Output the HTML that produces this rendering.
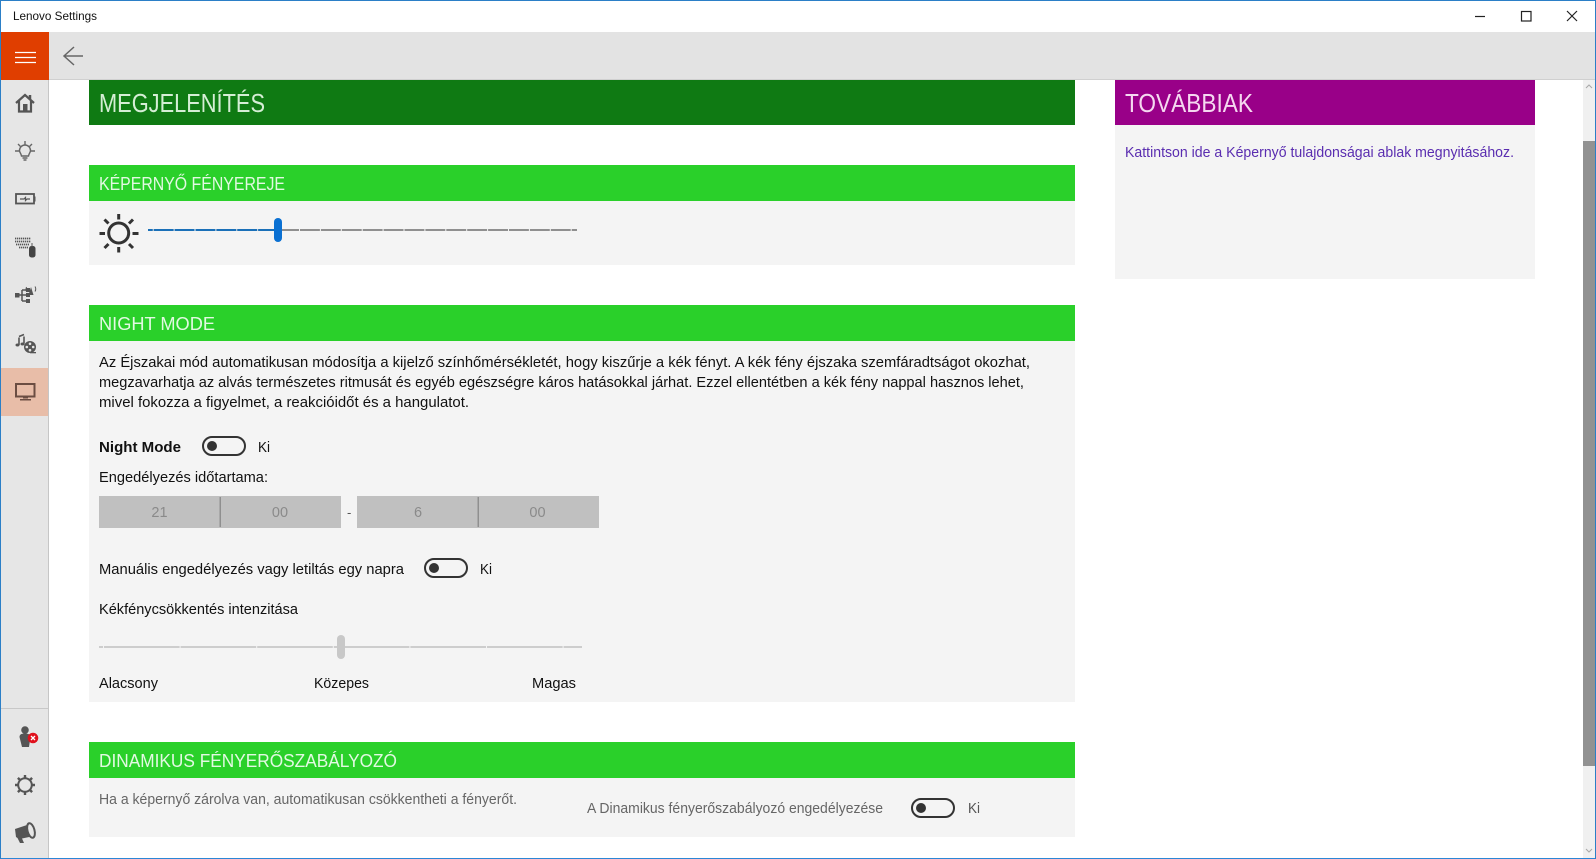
<!DOCTYPE html>
<html lang="hu"><head><meta charset="utf-8"><title>Lenovo Settings</title>
<style>
html,body{margin:0;padding:0;background:#fff;width:1596px;height:859px;overflow:hidden}
svg{display:block}
text{font-family:"Liberation Sans",sans-serif;white-space:pre}
</style></head><body>
<svg xmlns="http://www.w3.org/2000/svg" width="1596" height="859" viewBox="0 0 1596 859">
<rect width="1596" height="859" fill="#fff"/>
<!-- title bar -->
<text x="13" y="20" font-size="12" fill="#111" textLength="84" lengthAdjust="spacingAndGlyphs">Lenovo Settings</text>
<g fill="none" stroke="#222" stroke-width="1.2">
<path d="M1475 16.5H1485"/><rect x="1521.5" y="11.5" width="9.5" height="9.5"/><path d="M1567 11L1577 21M1577 11L1567 21"/>
</g>
<!-- top bar -->
<rect x="1" y="32" width="1594" height="48" fill="#e3e3e3"/>
<rect x="49" y="79" width="1546" height="1" fill="#d0d0d0"/>
<rect x="1" y="32" width="48" height="48" fill="#e03e00"/>
<path d="M15 52.5H36M15 57.5H36M15 62.5H36" stroke="#fff" stroke-width="1.2" fill="none"/>
<path d="M83 56H64M74 47L64 56L74 65" stroke="#666" stroke-width="1.5" fill="none"/>
<!-- sidebar -->
<rect x="1" y="80" width="47" height="778" fill="#e6e6e6"/>
<rect x="48" y="80" width="1" height="778" fill="#c6c6c6"/>
<rect x="1" y="368" width="47" height="48" fill="#e8bda8"/>
<rect x="1" y="708" width="47" height="1" fill="#c8c8c8"/>
<!-- home -->
<g fill="none" stroke="#555" stroke-width="2.2">
<path d="M16 103L25 95L34 103"/><path d="M19 101V111.500H31V101"/>
<path d="M30 95V99" stroke-width="2.5"/>
</g>
<rect x="23" y="104" width="4.500" height="7" fill="#555"/>
<!-- bulb -->
<g fill="none" stroke="#666" stroke-width="1.400">
<path d="M25 141V145M15 151H19M31 151H35M18 144L20.500 146.500M32 144L29.500 146.500"/>
<path d="M21.500 156C21 153 19.500 152.500 19.500 150.500A5.500 5.500 0 0 1 30.500 150.500C30.500 152.500 29 153 28.500 156Z"/>
<path d="M22.500 158H27.500M23.500 160H26.500" stroke-width="1.500"/>
</g>
<!-- battery -->
<g fill="none" stroke="#555" stroke-width="1.800">
<rect x="16" y="194" width="18" height="9.500"/>
<path d="M20 199H24L25.500 197.500V200.500L27 199H30" stroke-width="1.200"/>
</g>
<rect x="34" y="196.500" width="1.500" height="5" fill="#555"/>
<!-- keyboard -->
<g fill="none" stroke="#555" stroke-width="1.700" stroke-dasharray="1.300 .7">
<path d="M15 238.500H31M15 241.500H31M16 244.500H29M19 247.500H28"/>
</g>
<rect x="29" y="246" width="6.500" height="11.500" rx="2.500" fill="#444"/>
<path d="M32 243V247" stroke="#555" stroke-width="1"/>
<!-- network -->
<g stroke="#555" fill="#555">
<path d="M19 295H27M22 290V301M22 290H27M22 301H27" stroke-width="1.500" fill="none"/>
<rect x="15" y="293" width="4.500" height="4.500" stroke="none"/>
<rect x="26" y="288" width="4" height="4" stroke="none"/><rect x="26" y="293" width="4" height="4" stroke="none"/><rect x="26" y="299" width="4" height="4" stroke="none"/>
<path d="M28.500 295L31 287L33.500 295Z" stroke="none"/>
<path d="M26.500 287Q25.500 289.500 26.500 291.500M35 286.500Q36.500 289 35 291.500" fill="none" stroke-width="1"/>
</g>
<!-- music / film -->
<g fill="none" stroke="#555">
<path d="M19 337.500V345M24 336.500V343.500M19 336.500L24 334.500" stroke-width="1.600"/>
</g>
<g fill="#555">
<ellipse cx="17.500" cy="345" rx="2" ry="1.500"/><ellipse cx="22.500" cy="344" rx="2" ry="1.500"/>
<circle cx="30" cy="347" r="6"/><rect x="30" y="352" width="6" height="1.300"/>
</g>
<g fill="#e6e6e6"><circle cx="30" cy="343.800" r="1.300"/><circle cx="30" cy="350.200" r="1.300"/><circle cx="26.800" cy="347" r="1.300"/><circle cx="33.200" cy="347" r="1.300"/></g>
<!-- display -->
<rect x="16" y="384" width="18.500" height="12.500" fill="none" stroke="#6b4d42" stroke-width="2"/>
<path d="M23 397.500H28V398.500H23ZM20 399H31V400.500H20Z" fill="#6b4d42"/>
<!-- user -->
<circle cx="25" cy="730" r="3.800" fill="#555"/>
<path d="M19.500 737C19.500 734 22 733.500 25 733.500C28 733.500 30 734 30.500 737L29 747H22Z" fill="#555"/>
<circle cx="33" cy="738" r="5.300" fill="#e0101c"/>
<path d="M31 736L35 740M35 736L31 740" stroke="#fff" stroke-width="1.300"/>
<!-- gear -->
<circle cx="25" cy="785" r="6.800" fill="none" stroke="#555" stroke-width="2"/>
<g stroke="#555" stroke-width="2.400">
<path d="M25 775V778.500M25 791.500V795M15 785H18.500M31.500 785H35M17.900 777.900L20.400 780.400M29.600 789.600L32.100 792.100M32.100 777.900L29.600 780.400M20.400 789.600L17.900 792.100"/>
</g>
<!-- megaphone -->
<path d="M15 829L30 824L34 836L22 838.500L24 843H20L17.500 838L16 837Z" fill="#555"/>
<ellipse cx="31" cy="830.500" rx="3.500" ry="7.500" transform="rotate(-15 31 830.500)" fill="#e6e6e6" stroke="#555" stroke-width="2"/>

<!-- MEGJELENÍTÉS -->
<rect x="89" y="80" width="986" height="45" fill="#0f7a13"/>
<text x="99" y="112" font-size="26" fill="#d5eed5" textLength="166" lengthAdjust="spacingAndGlyphs">MEGJELENÍTÉS</text>
<!-- KÉPERNYŐ -->
<rect x="89" y="165" width="986" height="36" fill="#2ad02a"/>
<rect x="89" y="201" width="986" height="64" fill="#f4f4f4"/>
<text x="99" y="190" font-size="18" fill="#e2f9e2" textLength="186" lengthAdjust="spacingAndGlyphs">KÉPERNYŐ FÉNYEREJE</text>
<circle cx="118.700" cy="233" r="10" fill="none" stroke="#333" stroke-width="3"/>
<g stroke="#333" stroke-width="3">
<path d="M118.700 214V219.500M118.700 247V252.500M99.500 233.500H105M132.500 233.500H138.500M104.500 219.500L108.500 223.500M129 244L133 248M133 219.500L129 223.500M108.500 244L104.500 248"/>
</g>
<path d="M148 230H577" stroke="#8f8f8f" stroke-width="2" stroke-dasharray="19.900 1" stroke-dashoffset="15.200"/>
<path d="M148 230H276" stroke="#1a70b8" stroke-width="2" stroke-dasharray="19.900 1" stroke-dashoffset="15.200"/>
<rect x="274" y="218" width="8" height="24" rx="4" fill="#0a70d2"/>
<!-- NIGHT MODE -->
<rect x="89" y="305" width="986" height="36" fill="#2ad02a"/>
<rect x="89" y="341" width="986" height="361" fill="#f4f4f4"/>
<text x="99" y="330" font-size="18" fill="#e2f9e2" textLength="116" lengthAdjust="spacingAndGlyphs">NIGHT MODE</text>
<g font-size="14.500" fill="#111">
<text x="99" y="367" textLength="931" lengthAdjust="spacingAndGlyphs">Az Éjszakai mód automatikusan módosítja a kijelző színhőmérsékletét, hogy kiszűrje a kék fényt. A kék fény éjszaka szemfáradtságot okozhat,</text>
<text x="99" y="387" textLength="925" lengthAdjust="spacingAndGlyphs">megzavarhatja az alvás természetes ritmusát és egyéb egészségre káros hatásokkal járhat. Ezzel ellentétben a kék fény nappal hasznos lehet,</text>
<text x="99" y="407" textLength="370" lengthAdjust="spacingAndGlyphs">mivel fokozza a figyelmet, a reakcióidőt és a hangulatot.</text>
<text x="99" y="452" font-weight="bold" textLength="82" lengthAdjust="spacingAndGlyphs">Night Mode</text>
<text x="258" y="452" textLength="12" lengthAdjust="spacingAndGlyphs">Ki</text>
<text x="99" y="482" textLength="169" lengthAdjust="spacingAndGlyphs">Engedélyezés időtartama:</text>
<text x="99" y="574" textLength="305" lengthAdjust="spacingAndGlyphs">Manuális engedélyezés vagy letiltás egy napra</text>
<text x="480" y="574" textLength="12" lengthAdjust="spacingAndGlyphs">Ki</text>
<text x="99" y="614" textLength="199" lengthAdjust="spacingAndGlyphs">Kékfénycsökkentés intenzitása</text>
<text x="99" y="688" textLength="59" lengthAdjust="spacingAndGlyphs">Alacsony</text>
<text x="314" y="688" textLength="55" lengthAdjust="spacingAndGlyphs">Közepes</text>
<text x="532" y="688" textLength="44" lengthAdjust="spacingAndGlyphs">Magas</text>
<text x="347" y="517" fill="#555" font-size="13">-</text>
</g>
<rect x="203" y="437" width="42" height="18" rx="9" fill="none" stroke="#333" stroke-width="2"/>
<circle cx="212" cy="446" r="5" fill="#333"/>
<rect x="425" y="559" width="42" height="18" rx="9" fill="none" stroke="#333" stroke-width="2"/>
<circle cx="434" cy="568" r="5" fill="#333"/>
<rect x="99" y="496" width="242" height="32" fill="#c0c0c0"/>
<rect x="357" y="496" width="242" height="32" fill="#c0c0c0"/>
<rect x="219.500" y="497" width="1.500" height="30" fill="#8f8f8f"/>
<rect x="477.500" y="497" width="1.500" height="30" fill="#8f8f8f"/>
<g font-size="14.500" fill="#8a8a8a" text-anchor="middle">
<text x="159.500" y="517">21</text><text x="280" y="517">00</text><text x="418" y="517">6</text><text x="537.500" y="517">00</text>
</g>
<path d="M99 647H582" stroke="#cdcdcd" stroke-width="2" stroke-dasharray="75.600 1" stroke-dashoffset="71.600"/>
<rect x="337" y="635" width="8" height="24" rx="4" fill="#c8c8c8"/>
<!-- DINAMIKUS -->
<rect x="89" y="742" width="986" height="36" fill="#2ad02a"/>
<rect x="89" y="778" width="986" height="59" fill="#f4f4f4"/>
<text x="99" y="767" font-size="18" fill="#e2f9e2" textLength="298" lengthAdjust="spacingAndGlyphs">DINAMIKUS FÉNYERŐSZABÁLYOZÓ</text>
<text x="99" y="804" font-size="14.500" fill="#666" textLength="418" lengthAdjust="spacingAndGlyphs">Ha a képernyő zárolva van, automatikusan csökkentheti a fényerőt.</text>
<text x="587" y="813" font-size="14.500" fill="#666" textLength="296" lengthAdjust="spacingAndGlyphs">A Dinamikus fényerőszabályozó engedélyezése</text>
<text x="968" y="813" font-size="14.500" fill="#555" textLength="12" lengthAdjust="spacingAndGlyphs">Ki</text>
<rect x="912" y="799" width="42" height="18" rx="9" fill="none" stroke="#333" stroke-width="2"/>
<circle cx="921" cy="808" r="5" fill="#333"/>
<!-- TOVÁBBIAK -->
<rect x="1115" y="80" width="420" height="45" fill="#990088"/>
<rect x="1115" y="125" width="420" height="154" fill="#f4f4f4"/>
<text x="1125" y="112" font-size="26" fill="#f5d8f0" textLength="128" lengthAdjust="spacingAndGlyphs">TOVÁBBIAK</text>
<text x="1125" y="157" font-size="14.500" fill="#5a2db0" textLength="389" lengthAdjust="spacingAndGlyphs">Kattintson ide a Képernyő tulajdonságai ablak megnyitásához.</text>
<!-- scrollbar -->
<rect x="1583" y="80" width="12" height="778" fill="#f0f0f0"/>
<rect x="1583" y="141" width="12" height="625" fill="#929292"/>
<path d="M1586 88L1589 85L1592 88M1586 849L1589 852L1592 849" fill="none" stroke="#a8a8a8" stroke-width="1"/>
<!-- window border -->
<rect x="0" y="0" width="1596" height="1" fill="#2b7fc7"/>
<rect x="0" y="858" width="1596" height="1" fill="#2b86d6"/>
<rect x="0" y="0" width="1" height="859" fill="#2b7fc7"/>
<rect x="1595" y="0" width="1" height="859" fill="#2b7fc7"/>
</svg>
</body></html>
